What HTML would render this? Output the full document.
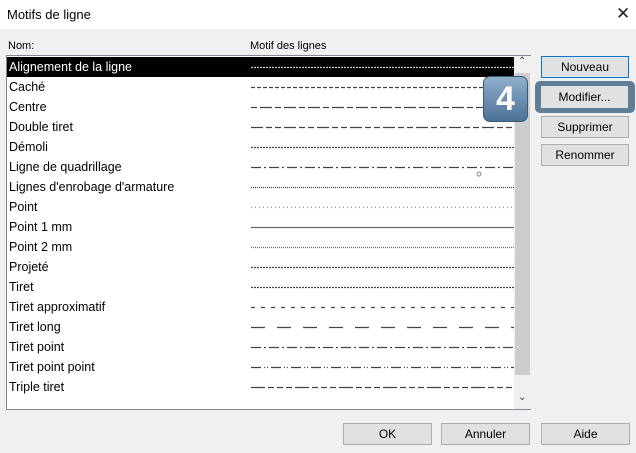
<!DOCTYPE html>
<html><head><style>
body{margin:0;width:636px;height:453px;background:#f0f0f0;font-family:"Liberation Sans",sans-serif;font-size:12px;position:relative;overflow:hidden;color:#000}
.title{position:absolute;left:0;top:0;width:636px;height:29px;background:#fff}
.tt{position:absolute;left:7px;top:7px;font-size:13px}
.x{position:absolute;left:616px;top:4px;font-size:17px;color:#222}
.hd{position:absolute;top:40px;font-size:11px}
.list{position:absolute;left:6px;top:55px;width:525px;height:355px;background:#fff;border:1px solid #828790;box-sizing:border-box}
.row{position:absolute;left:0;width:507px;height:20px;line-height:20px;padding-left:2px;font-size:12.5px}
.sel{background:#000;color:#fff}
.sb{position:absolute;left:507px;top:0;width:17px;height:353px;background:#f0f0f0}
.th{position:absolute;left:1px;top:17px;width:15px;height:302px;background:#cdcdcd}
.btn{position:absolute;height:22px;background:#e1e1e1;border:1px solid #adadad;box-sizing:border-box;text-align:center;line-height:20px;font-size:12px}
svg{position:absolute;left:0;top:0}
</style></head><body>
<div class="title"><span class="tt">Motifs de ligne</span><span class="x">✕</span></div>
<div class="hd" style="left:8px">Nom:</div>
<div class="hd" style="left:250px">Motif des lignes</div>
<div class="list">
<div class="row sel" style="top:1px">Alignement de la ligne</div>
<div class="row" style="top:21px">Caché</div>
<div class="row" style="top:41px">Centre</div>
<div class="row" style="top:61px">Double tiret</div>
<div class="row" style="top:81px">Démoli</div>
<div class="row" style="top:101px">Ligne de quadrillage</div>
<div class="row" style="top:121px">Lignes d'enrobage d'armature</div>
<div class="row" style="top:141px">Point</div>
<div class="row" style="top:161px">Point 1 mm</div>
<div class="row" style="top:181px">Point 2 mm</div>
<div class="row" style="top:201px">Projeté</div>
<div class="row" style="top:221px">Tiret</div>
<div class="row" style="top:241px">Tiret approximatif</div>
<div class="row" style="top:261px">Tiret long</div>
<div class="row" style="top:281px">Tiret point</div>
<div class="row" style="top:301px">Tiret point point</div>
<div class="row" style="top:321px">Triple tiret</div>
<svg width="507" height="353"><g stroke-width="1.2" fill="none">
<line x1="244" x2="507" y1="11.5" y2="11.5" stroke="#ccc" stroke-dasharray="2 1"/>
<line x1="244" x2="507" y1="31.5" y2="31.5" stroke="#444" stroke-dasharray="4 2"/>
<line x1="244" x2="507" y1="51.5" y2="51.5" stroke="#444" stroke-dasharray="6 3 12 3"/>
<line x1="244" x2="507" y1="71.5" y2="71.5" stroke="#444" stroke-dasharray="12 3 6 3 6 3"/>
<line x1="244" x2="507" y1="91.5" y2="91.5" stroke="#444" stroke-dasharray="2 1"/>
<line x1="244" x2="507" y1="111.5" y2="111.5" stroke="#444" stroke-dasharray="10 3 2 3"/>
<circle cx="472" cy="118" r="2" stroke="#999"/>
<line x1="244" x2="507" y1="131.5" y2="131.5" stroke="#444" stroke-dasharray="1 1"/>
<line x1="244" x2="507" y1="151.5" y2="151.5" stroke="#999" stroke-dasharray="1 3"/>
<line x1="244" x2="507" y1="171.5" y2="171.5" stroke="#666"/>
<line x1="244" x2="507" y1="191.5" y2="191.5" stroke="#666" stroke-dasharray="1 1"/>
<line x1="244" x2="507" y1="211.5" y2="211.5" stroke="#444" stroke-dasharray="2 1"/>
<line x1="244" x2="507" y1="231.5" y2="231.5" stroke="#444" stroke-dasharray="2 1"/>
<line x1="244" x2="507" y1="251.5" y2="251.5" stroke="#444" stroke-dasharray="4 6"/>
<line x1="244" x2="507" y1="271.5" y2="271.5" stroke="#444" stroke-dasharray="14 12"/>
<line x1="244" x2="507" y1="291.5" y2="291.5" stroke="#444" stroke-dasharray="10 3 2 3"/>
<line x1="244" x2="507" y1="311.5" y2="311.5" stroke="#444" stroke-dasharray="10 3 1 2 1 3"/>
<line x1="244" x2="507" y1="331.5" y2="331.5" stroke="#444" stroke-dasharray="14 3 6 3 6 3 6 3"/>
</g></svg>
<div class="sb"><div class="th"></div>
<div style="position:absolute;left:4px;top:0;font-size:10px;color:#444">&#8963;</div>
<div style="position:absolute;left:4px;top:336px;font-size:10px;color:#444">&#8964;</div></div>
</div>
<div class="btn" style="left:541px;top:56px;width:88px;border:1px solid #0078d7">Nouveau</div>
<div style="position:absolute;left:535px;top:81px;width:100px;height:32px;background:#5f7d94;border-radius:5px"></div>
<div class="btn" style="left:541px;top:86px;width:87px;border-color:#e1e1e1">Modifier...</div>
<div class="btn" style="left:541px;top:116px;width:88px">Supprimer</div>
<div class="btn" style="left:541px;top:144px;width:88px">Renommer</div>
<div style="position:absolute;left:483px;top:76px;width:45px;height:46px;border-radius:7px;background:linear-gradient(#8fb0cd,#4b7196);border:1px solid #3d5a75;box-sizing:border-box;color:#fff;font-size:34px;font-weight:bold;text-align:center;line-height:44px">4</div>
<div class="btn" style="left:343px;top:423px;width:89px">OK</div>
<div class="btn" style="left:441px;top:423px;width:89px">Annuler</div>
<div class="btn" style="left:541px;top:423px;width:89px">Aide</div>
</body></html>
